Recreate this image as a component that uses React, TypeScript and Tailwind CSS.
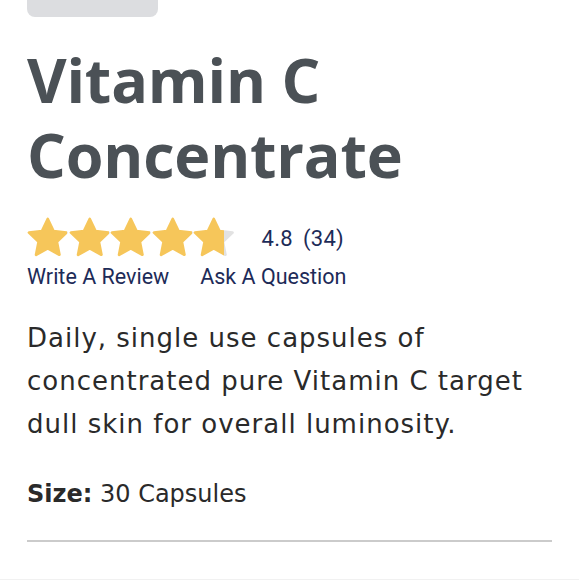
import React from 'react'

const STAR = 'M12 2.5l2.9 6.1 6.6.8-4.9 4.6 1.3 6.6L12 17.3l-5.9 3.3 1.3-6.6-4.9-4.6 6.6-.8z'

function Star({ fill, id }: { fill: number; id: string }) {
  return (
    <svg viewBox="1.5 1.5 21 20" className="w-[41.5px] h-[39.5px] shrink-0">
      <defs>
        <linearGradient id={id} x1="0" x2="1" y1="0" y2="0">
          <stop offset={`${fill * 100}%`} stopColor="#f6c65a" />
          <stop offset={`${fill * 100}%`} stopColor="#e2e2e2" />
        </linearGradient>
      </defs>
      <path d={STAR} fill={`url(#${id})`} stroke={`url(#${id})`} strokeWidth="1.4" strokeLinejoin="round" />
    </svg>
  )
}

const body = { fontFamily: '"DejaVu Sans", sans-serif' }
const ui = { fontFamily: 'Roboto, sans-serif' }

export default function App() {
  const rating = 4.8
  return (
    <div className="w-[579px] h-[580px] bg-white overflow-hidden border-b border-[#f1f1f1]">
      <div className="px-[27px]">
        {/* image placeholder stub */}
        <div className="w-[131px] h-[17px] bg-[#dcdde0] rounded-b-[8px]" />

        <h1
          className="mt-[25px] text-[61px] leading-[75px] font-bold text-[#4b5156] tracking-[-0.2px]"
          style={{ fontFamily: '"Open Sans", sans-serif' }}
        >
          Vitamin C<br />Concentrate
        </h1>

        {/* rating */}
        <div className="mt-[25px] flex items-center" style={ui}>
          <div className="flex">
            {[0, 1, 2, 3, 4].map((i) => (
              <Star key={i} id={`s${i}`} fill={rating - i >= 1 ? 1 : 0.76} />
            ))}
          </div>
          <div className="ml-[27px] pt-[3px] text-[22px] tracking-[0.3px] text-[#1d2b58] flex">
            <span>4.8</span>
            <span className="ml-[10px]">(34)</span>
          </div>
        </div>
        <div className="mt-[6px] flex gap-[31px] text-[21.5px] leading-[28px] text-[#1d2b58]" style={ui}>
          <span>Write A Review</span>
          <span>Ask A Question</span>
        </div>

        <p className="mt-[26px] text-[26px] leading-[43px] tracking-[1px] text-[#2a2a2a]" style={body}>
          Daily, single use capsules of concentrated pure Vitamin C target dull skin for overall luminosity.
        </p>

        <p className="mt-[32px] text-[24px] leading-[32px] text-[#2a2a2a]" style={body}>
          <span className="font-bold">Size:</span> 30 Capsules
        </p>

        <div className="mt-[30px] h-[2px] bg-[#cbcbcb]" />
      </div>
    </div>
  )
}
